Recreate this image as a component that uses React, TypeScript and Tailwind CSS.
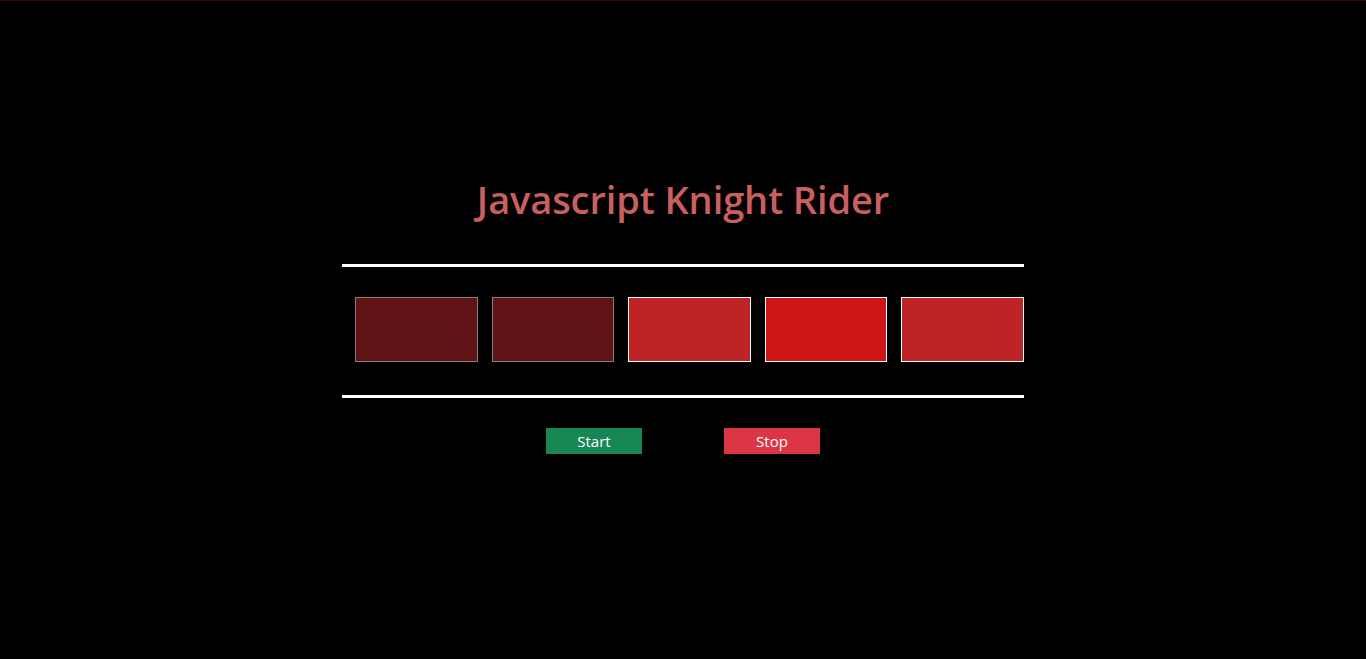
const LIGHTS = [
  { bg: 'bg-[#5f1315]', border: 'border-[#8c7b7b]' },
  { bg: 'bg-[#5f1315]', border: 'border-[#8c7b7b]' },
  { bg: 'bg-[#be2325]', border: 'border-white' },
  { bg: 'bg-[#cc1616]', border: 'border-white' },
  { bg: 'bg-[#be2325]', border: 'border-white' },
];

export default function App() {
  return (
    <div
      className="h-[659px] w-full bg-black border-t border-[#3a0808] flex flex-col items-center"
      style={{ fontFamily: '"Open Sans", "Noto Sans", sans-serif' }}
    >
      {/* Title */}
      <h1 className="mt-[173px] text-[38px] leading-[50px] font-semibold text-[#c95f5f] tracking-[-0.1px]">
        Javascript Knight Rider
      </h1>

      <div className="w-[682px] mt-[40px]">
        <div className="h-[3px] bg-white" />

        {/* Lights */}
        <div className="grid grid-cols-5 gap-[14px] pl-[13px] mt-[30px]">
          {LIGHTS.map((l, i) => (
            <div key={i} className={`h-[65px] border ${l.bg} ${l.border}`} />
          ))}
        </div>

        <div className="h-[3px] bg-white mt-[33px]" />

        {/* Controls */}
        <div className="flex justify-center gap-[82px] mt-[30px]">
          <button className="w-[96px] h-[26px] bg-[#198754] text-white text-[15px] leading-[26px]">
            Start
          </button>
          <button className="w-[96px] h-[26px] bg-[#dc3545] text-white text-[15px] leading-[26px]">
            Stop
          </button>
        </div>
      </div>
    </div>
  );
}
